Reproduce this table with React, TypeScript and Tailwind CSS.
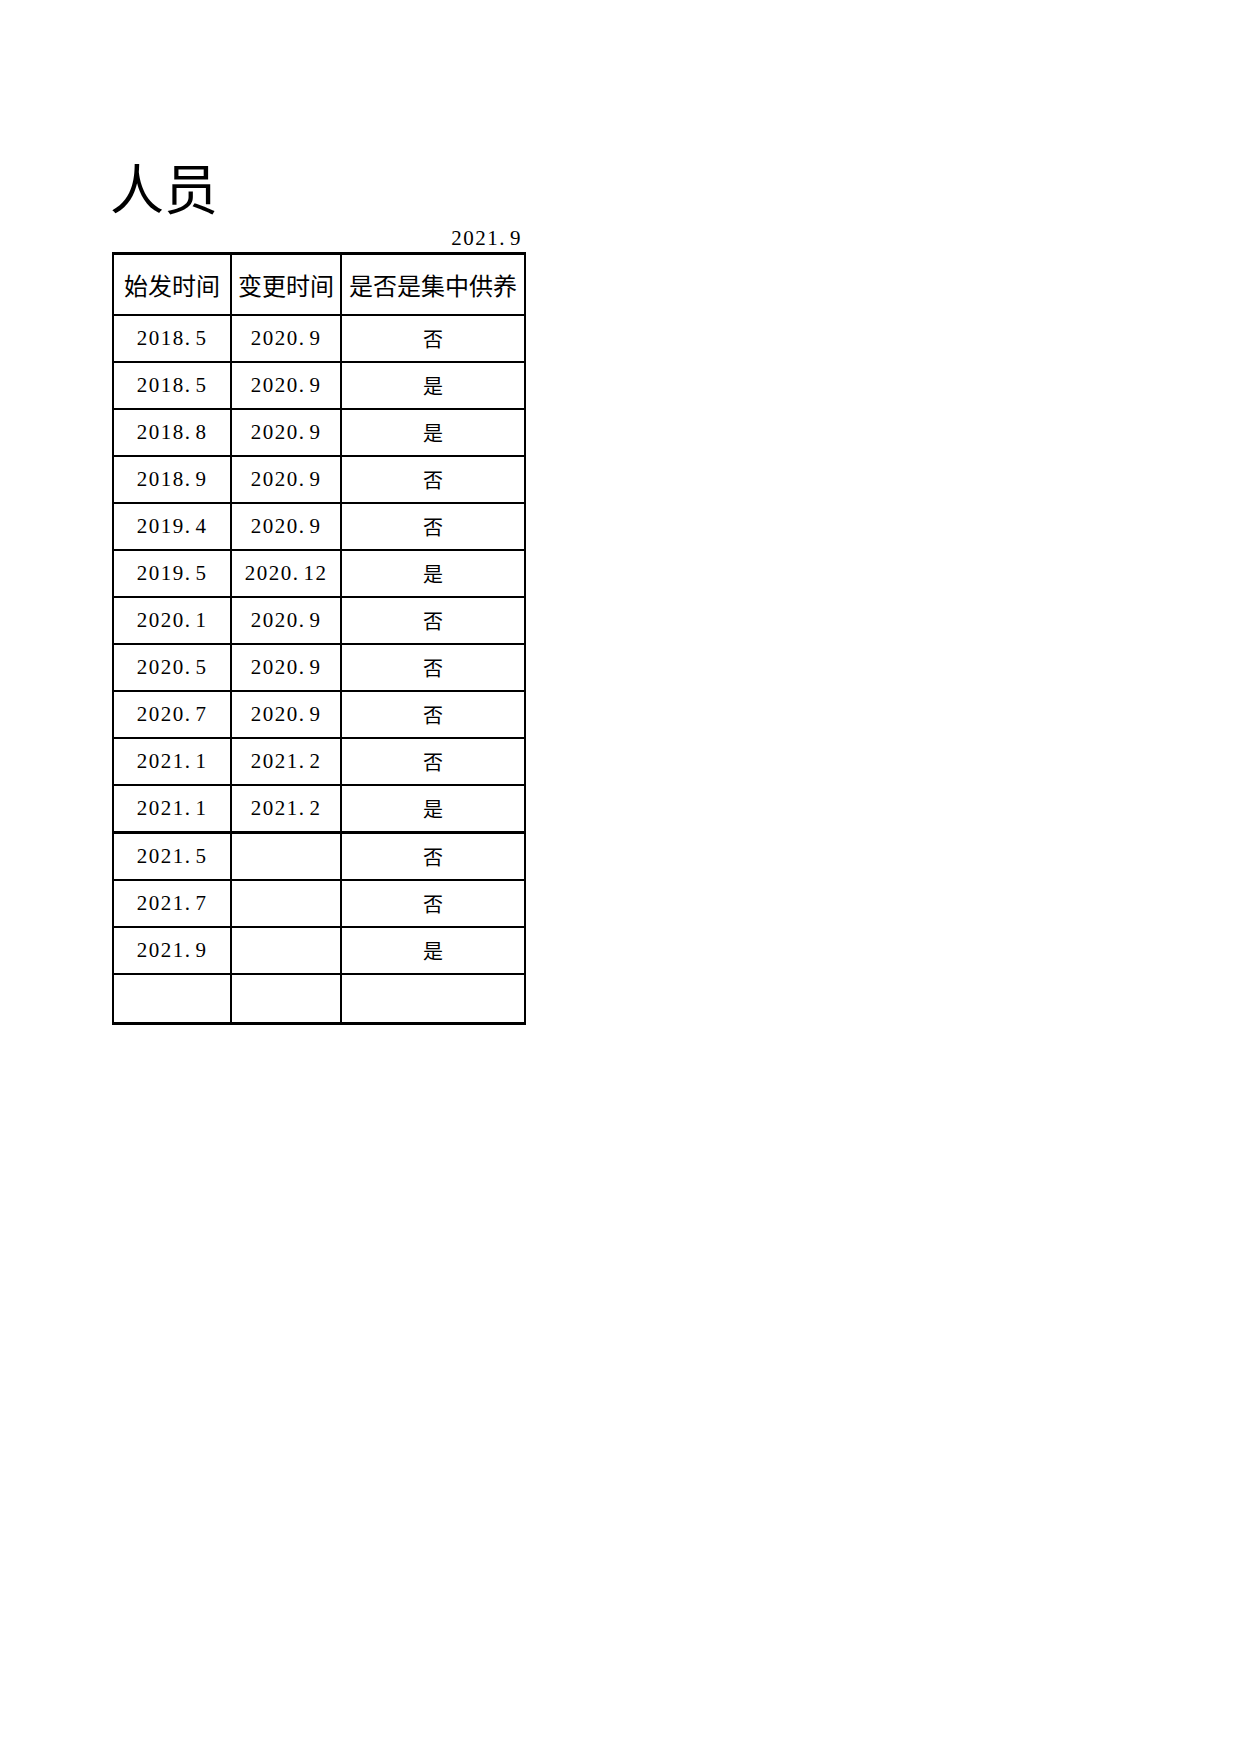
import React from "react";

const rows: [string, string, string][] = [
  ["2018.5", "2020.9", "否"],
  ["2018.5", "2020.9", "是"],
  ["2018.8", "2020.9", "是"],
  ["2018.9", "2020.9", "否"],
  ["2019.4", "2020.9", "否"],
  ["2019.5", "2020.12", "是"],
  ["2020.1", "2020.9", "否"],
  ["2020.5", "2020.9", "否"],
  ["2020.7", "2020.9", "否"],
  ["2021.1", "2021.2", "否"],
  ["2021.1", "2021.2", "是"],
  ["2021.5", "", "否"],
  ["2021.7", "", "否"],
  ["2021.9", "", "是"],
];

// digits look like a half-width serif face, so serif + a bit of tracking
const num = "font-['Liberation_Serif','Noto_Sans_CJK_SC',serif] tracking-[1.5px]";

// the period sits in a full half-width cell, so give it some room after
function Num({ v }: { v: string }) {
  if (!v) return null;
  const [a, b] = v.split(".");
  return (
    <span>
      {a}
      <span className="mr-[4px]">.</span>
      {b}
    </span>
  );
}

export default function App() {
  return (
    <div className="w-full h-[1754px] bg-white text-black font-['Noto_Sans_CJK_SC',sans-serif]">
      <div className="pt-[160px] pl-[112px] w-[526px]">
        {/* Title */}
        <h1 className="-ml-[2px] text-[54px] leading-none font-normal">人员</h1>

        <div className={`${num} text-[21px] leading-none text-right pr-[4px] mt-[14px] mb-[3px]`}>
          <Num v="2021.9" />
        </div>

        <div className="w-[414px] border-x-2 border-y-[3px] border-black">
          {/* Header */}
          <div className="flex h-[61px] border-b-2 border-black text-[24px] leading-none">
            <div className="w-[118px] shrink-0 border-r-2 border-black flex items-center justify-center">始发时间</div>
            <div className="w-[110px] shrink-0 border-r-2 border-black flex items-center justify-center">变更时间</div>
            <div className="flex-1 flex items-center justify-center">是否是集中供养</div>
          </div>

          {rows.map((r, i) => (
            <div
              key={i}
              className={`flex ${i === 10 ? "h-[48px] border-b-[3px]" : "h-[47px] border-b-2"} border-black ${num} text-[21px] leading-none`}
            >
              <div className="w-[118px] shrink-0 border-r-2 border-black flex items-center justify-center"><Num v={r[0]} /></div>
              <div className="w-[110px] shrink-0 border-r-2 border-black flex items-center justify-center"><Num v={r[1]} /></div>
              <div className="flex-1 flex items-center justify-center font-['Noto_Sans_CJK_SC',sans-serif] tracking-normal text-[20px]">{r[2]}</div>
            </div>
          ))}

          {/* Empty last row */}
          <div className="flex h-[47px]">
            <div className="w-[118px] shrink-0 border-r-2 border-black" />
            <div className="w-[110px] shrink-0 border-r-2 border-black" />
            <div className="flex-1" />
          </div>
        </div>
      </div>
    </div>
  );
}
